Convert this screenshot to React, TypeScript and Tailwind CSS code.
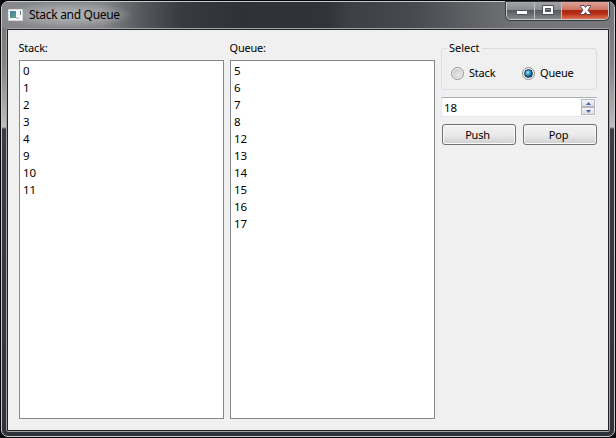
import React from 'react';

const stack = [0, 1, 2, 3, 4, 9, 10, 11];
const queue = [5, 6, 7, 8, 12, 13, 14, 15, 16, 17];

function ListBox({ label, items }: { label: string; items: number[] }) {
  return (
    <div className="flex w-[205px] flex-col">
      <div className="-ml-[0.5px] h-[20px] leading-[16px] tracking-[-0.2px]">{label}</div>
      <ul className="h-[359px] border border-[#828790] bg-white pl-[3px] pt-[1px]">
        {items.map((n) => (
          <li key={n} className="h-[17px] text-[11.5px] leading-[18px] tracking-[-0.2px]">{n}</li>
        ))}
      </ul>
    </div>
  );
}

function Radio({ label, checked }: { label: string; checked?: boolean }) {
  return (
    <div className="flex h-[14px] w-[71px] shrink-0 items-center gap-[5px]">
      <span className="flex size-[13px] shrink-0 items-center justify-center rounded-full border border-[#8e8f8f] bg-[#f4f4f4]">
        {checked ? (
          <span className="size-[9px] rounded-full border border-[#173650] bg-[radial-gradient(circle_at_40%_35%,#a5e5f8_0%,#2b94bd_40%,#0b3554_85%)]" />
        ) : (
          <span className="size-[9px] rounded-full border border-[#c6c9cc] bg-linear-to-br from-[#c5c9cd] to-[#f6f6f6]" />
        )}
      </span>
      <span className="leading-[14px] tracking-[-0.2px]">{label}</span>
    </div>
  );
}

function PushButton({ label }: { label: string }) {
  return (
    <button className="h-[21px] w-[74px] rounded-[3px] border border-[#707070] bg-linear-to-b from-[#f2f2f2] from-0% via-[#ebebeb] via-50% to-[#cfcfcf] pr-[3px] leading-[18px] tracking-[-0.2px] shadow-[inset_0_0_0_1px_#fafafa]">
      {label}
    </button>
  );
}

function Arrow({ down }: { down?: boolean }) {
  return (
    <span className="flex h-[8px] items-center justify-center border border-[#b5b8be] bg-linear-to-b from-[#f5f5f5] to-[#dedede]">
      <svg width="5" height="3" viewBox="0 0 5 3">
        <path d={down ? 'M0 0h5L2.5 3z' : 'M0 3h5L2.5 0z'} fill="#4a62b8" />
      </svg>
    </span>
  );
}

function TitleButtons() {
  return (
    <div className="flex h-[18px] w-[103px] overflow-hidden rounded-b-[5px] border border-t-0 border-[#c9cacc] shadow-[0_0_0_1px_#34363a]">
      <div className="w-[28px] border-r border-[#c0c1c4] bg-[linear-gradient(#a4a5a9_0%,#8b8c91_45%,#55575d_48%,#85868c_100%)]">
        <svg width="27" height="18" viewBox="0 0 27 18">
          <rect x="9.5" y="8.5" width="11" height="4" rx="1" fill="#fff" stroke="#4d4f5c" />
        </svg>
      </div>
      <div className="w-[27px] border-r border-[#c0c1c4] bg-[linear-gradient(#a4a5a9_0%,#8b8c91_45%,#55575d_48%,#85868c_100%)]">
        <svg width="26" height="18" viewBox="0 0 26 18">
          <path d="M7.5 3.5h11v9h-11zM10.5 6.5v3h5v-3z" fill="#fff" fillRule="evenodd" stroke="#4d4f5c" />
        </svg>
      </div>
      <div className="w-[46px] bg-[linear-gradient(#dda498_0%,#cd7564_44%,#ac2711_48%,#b52c14_68%,#df7455_100%)]">
        <svg width="46" height="18" viewBox="0 0 46 18">
          <path d="M18.5 3.5h3.5l1.5 2 1.5-2h3.5v1l-2.5 3.5 2.5 3.5v1h-3.5l-1.5-2-1.5 2h-3.5v-1l2.5-3.5-2.5-3.5z" fill="#fff" stroke="#5a4650" />
        </svg>
      </div>
    </div>
  );
}

export default function App() {
  return (
    <div className="h-[438px] w-[616px] overflow-hidden bg-[#08080b] pl-px pt-px font-['Noto_Sans','Open_Sans',sans-serif] text-[11px] text-black">
      <div className="h-[436px] w-[614px] rounded-[7px] border border-[#c6c8ca] bg-[linear-gradient(#747679_0px,#77797b_28px,#858786_65px,#bbb9b9_122px,#c0bebe_125px,#3a3d43_127px,#30343a_100%)]">
        <div className="flex h-[26px] justify-between rounded-t-[6px] bg-[linear-gradient(90deg,#85878a_0px,#85878a_100px,#55585c_140px,#373a3e_180px,#2e3136_240px,#303338_325px,#3c3f43_345px,#46494e_410px,#606266_470px,#747578_520px,#77787b_100%)]">
          <div className="flex h-[26px] items-center gap-[6px] bg-[radial-gradient(ellipse_at_center,#b8b9bb_0%,#a5a7a999_48%,#85878a00_72%)] pl-[6px] pr-[12px]">
            <svg width="15" height="12" viewBox="0 0 15 12">
              <defs>
                <linearGradient id="picture" x2="1" y2="1">
                  <stop stopColor="#4976a8" />
                  <stop offset="1" stopColor="#5fab84" />
                </linearGradient>
              </defs>
              <path d="M.5.5h14v11H.5z" fill="#fafafa" stroke="#d8dadb" />
              <path d="M2 2h6v7H2z" fill="url(#picture)" />
              <path d="M8 8h3v2H8z" fill="#cfd2d5" />
              <path d="M12 2h1v2h-1z" fill="#3b69b0" />
              <path d="M12 4h1v2h-1z" fill="#57a168" />
            </svg>
            <span className="whitespace-nowrap text-[12px] leading-[16px] tracking-[-0.3px]">Stack and Queue</span>
          </div>
          <div className="pr-[5px]"><TitleButtons /></div>
        </div>
        <div className="ml-[4px] h-[404px] w-[604px] rounded-[2px] border border-[#a2a4a5]">
          <div className="flex h-[402px] w-[602px] border border-[#202226] bg-[#f0f0f0] pl-[11px] pt-[10px]">
            <div className="flex gap-[6px]">
              <ListBox label="Stack:" items={stack} />
              <ListBox label="Queue:" items={queue} />
            </div>
            <div className="ml-[6px] flex w-[156px] flex-col">
              <fieldset className="h-[50px] w-[156px] min-w-0 rounded-[3px] border border-[#d5dfe5] pl-[9px]">
                <legend className="-ml-[4px] h-[16px] px-[2px] leading-[16px]">Select</legend>
                <div className="flex w-[142px] pt-[10px]">
                  <Radio label="Stack" />
                  <Radio label="Queue" checked />
                </div>
              </fieldset>
              <div className="mt-[7px] flex h-[20px] justify-between border border-[#e3e9ef] border-t-[#abadb3] bg-white pl-[2px] pr-px pt-px">
                <span className="text-[11.5px] leading-[18px] tracking-[-0.2px]">18</span>
                <span className="flex w-[14px] flex-col"><Arrow /><Arrow down /></span>
              </div>
              <div className="mt-[7px] flex gap-[7px] pl-px">
                <PushButton label="Push" />
                <PushButton label="Pop" />
              </div>
            </div>
          </div>
        </div>
      </div>
    </div>
  );
}
